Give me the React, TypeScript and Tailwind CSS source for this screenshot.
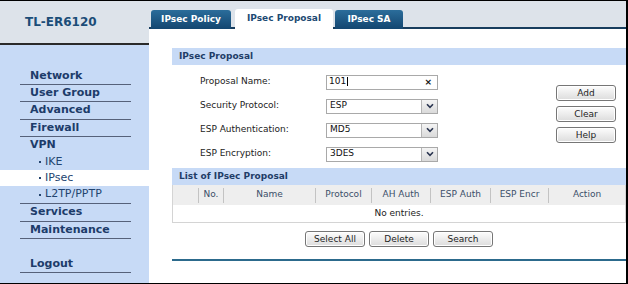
import React from "react";

/* ── Sidebar menu rows: height taken so the rules land where the screenshot has them ── */
type MenuRow = {
  label: string;
  h: string;
  kind: "main" | "sub" | "gap";
  line?: boolean;
  active?: boolean;
};

const menu: MenuRow[] = [
  { label: "Network", h: "h-[17px]", kind: "main", line: true },
  { label: "User Group", h: "h-[17px]", kind: "main", line: true },
  { label: "Advanced", h: "h-[18px]", kind: "main", line: true },
  { label: "Firewall", h: "h-[17px]", kind: "main", line: true },
  { label: "VPN", h: "h-[17px]", kind: "main" },
  { label: "IKE", h: "h-[16px]", kind: "sub" },
  { label: "IPsec", h: "h-[16px]", kind: "sub", active: true },
  { label: "L2TP/PPTP", h: "h-[18px]", kind: "sub", line: true },
  { label: "Services", h: "h-[18px]", kind: "main", line: true },
  { label: "Maintenance", h: "h-[17px]", kind: "main", line: true },
  { label: "", h: "h-[17px]", kind: "gap" },
  { label: "Logout", h: "h-[17px]", kind: "main", line: true },
];

const columns = [
  { label: "", w: "w-[26px]" },
  { label: "No.", w: "w-[25px]" },
  { label: "Name", w: "w-[92px]" },
  { label: "Protocol", w: "w-[56px]" },
  { label: "AH Auth", w: "w-[59px]" },
  { label: "ESP Auth", w: "w-[60px]" },
  { label: "ESP Encr", w: "w-[58px]" },
  { label: "Action", w: "flex-1" },
];

const selects = [
  { label: "Security Protocol:", value: "ESP" },
  { label: "ESP Authentication:", value: "MD5" },
  { label: "ESP Encryption:", value: "3DES" },
];

function Btn({ children }: { children: React.ReactNode }) {
  return (
    <button className="flex h-[16px] w-[60px] items-center justify-center rounded-[3px] border border-[#767676] bg-linear-to-b from-[#fdfdfd] to-[#dcdcdc] text-[9px] leading-none text-[#1e1e1e] shadow-[inset_0_0_0_1px_#ffffff]">
      {children}
    </button>
  );
}

function Chevron() {
  return (
    <span className="flex h-full w-[16px] items-center justify-center border-l border-[#b5b5b5] bg-linear-to-b from-[#f4f4f4] to-[#dadada]">
      <svg width="8" height="6" viewBox="0 0 8 6">
        <polyline points="1,1.2 4,4.4 7,1.2" fill="none" stroke="#2a3550" strokeWidth="1.6" />
      </svg>
    </span>
  );
}

export default function App() {
  return (
    <div className="flex h-[284px] w-[628px] border-t border-r-2 border-b border-black bg-white font-['DejaVu_Sans',sans-serif]">
      {/* ── Left menu ─────────────────────────────────────── */}
      <div className="flex w-[149px] flex-col">
        <div className="flex h-[44px] items-center border-b-2 border-[#2a2a2a] bg-[#dde3ea] pl-[25px] text-[12px] font-bold text-[#1b4d78]">
          TL-ER6120
        </div>
        <div className="flex-1 bg-[#c7daf6] pt-[23px]">
          {menu.map((m, i) => (
            <div key={i} className={`${m.h} ${m.active ? "bg-white" : ""}`}>
              <div
                className={`ml-[20px] mr-[18px] flex h-full items-center ${
                  m.line ? "border-b border-[#56617a]" : ""
                }`}
              >
                {m.kind === "main" && (
                  <span className="pl-[10px] text-[11px] font-bold text-[#1d3c6a]">{m.label}</span>
                )}
                {m.kind === "sub" && (
                  <span className="flex items-center pl-[19px] text-[11px] text-[#23446f]">
                    <span className="mr-[4px] inline-block h-[2px] w-[2px] bg-[#23446f]" />
                    {m.label}
                  </span>
                )}
              </div>
            </div>
          ))}
        </div>
      </div>

      {/* ── Main panel ────────────────────────────────────── */}
      <div className="flex flex-1 flex-col">
        <div className="flex h-[28px] items-end border-b-2 border-[#173d5e] bg-[#dde3ea] pl-[2px]">
          <div className="mb-[-2px] flex h-[19px] w-[80px] items-center justify-center rounded-t-[3px] bg-linear-to-b from-[#2b6d9b] to-[#134670] text-[9px] font-bold text-white">
            IPsec Policy
          </div>
          <div className="mb-[-2px] ml-[4px] flex h-[20px] w-[98px] items-center justify-center rounded-t-[3px] bg-white text-[9px] font-bold text-[#1d4a73]">
            IPsec Proposal
          </div>
          <div className="mb-[-2px] ml-[2px] flex h-[19px] w-[68px] items-center justify-center rounded-t-[3px] bg-linear-to-b from-[#2b6d9b] to-[#134670] text-[9px] font-bold text-white">
            IPsec SA
          </div>
        </div>

        <div className="flex flex-1 flex-col pt-[19px] pl-[23px]">
          <div className="flex h-[17px] items-center bg-[#c7daf6] pl-[7px] text-[9px] font-bold text-[#1f3d68]">
            IPsec Proposal
          </div>

          <div className="flex h-[103px]">
            <div className="flex flex-col pt-[9px] pl-[28px]">
              <div className="flex h-[16px] items-center">
                <span className="w-[126px] text-[9px] text-[#222]">Proposal Name:</span>
                <div className="flex h-[15px] w-[112px] items-center justify-between border border-[#a9a9a9] px-[2px] text-[9px] text-[#111]">
                  <span>
                    101<span className="ml-[1px] inline-block h-[9px] w-px bg-black align-middle" />
                  </span>
                  <span className="pr-[3px] text-[9px] font-bold leading-none">×</span>
                </div>
              </div>
              {selects.map((s) => (
                <div key={s.label} className="mt-[8px] flex h-[16px] items-center">
                  <span className="w-[126px] text-[9px] text-[#222]">{s.label}</span>
                  <div className="flex h-[15px] w-[112px] items-center justify-between border border-[#a9a9a9] text-[9px] text-[#111]">
                    <span className="pl-[3px]">{s.value}</span>
                    <Chevron />
                  </div>
                </div>
              ))}
            </div>
            <div className="ml-auto mr-[10px] flex flex-col gap-[5px] pt-[20px]">
              <Btn>Add</Btn>
              <Btn>Clear</Btn>
              <Btn>Help</Btn>
            </div>
          </div>

          <div className="flex h-[17px] items-center bg-[#c7daf6] pl-[7px] text-[9px] font-bold text-[#1f3d68]">
            List of IPsec Proposal
          </div>
          <div className="border-x border-b border-[#d4d4d4]">
            <div className="flex h-[20px] items-center bg-[#eeeeee]">
              {columns.map((c, i) => (
                <div
                  key={i}
                  className={`${c.w} flex h-[15px] items-center justify-center text-[9px] text-[#3b4f69] ${
                    i < columns.length - 1 ? "border-r border-[#c3c3c3]" : ""
                  }`}
                >
                  {c.label}
                </div>
              ))}
            </div>
            <div className="flex h-[17px] items-center justify-center text-[9px] text-[#222]">No entries.</div>
          </div>

          <div className="mt-[8px] flex justify-center gap-[4px]">
            <Btn>Select All</Btn>
            <Btn>Delete</Btn>
            <Btn>Search</Btn>
          </div>

          <div className="mt-[12px] h-[2px] bg-[#2c6a8c]" />
        </div>
      </div>
    </div>
  );
}
